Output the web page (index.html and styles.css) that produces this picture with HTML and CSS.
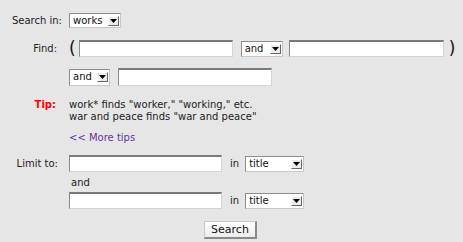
FILE: index.html
```
<!DOCTYPE html>
<html>
<head>
<meta charset="utf-8">
<link rel="stylesheet" href="styles.css">
</head>
<body>
<form class="search">
  <div class="row row-in">
    <span class="label label-in">Search in:</span>
    <span class="select sel-works"><span class="sel-text">works</span><span class="arrow"><svg width="7" height="4" viewBox="0 0 7 4"><path d="M0 0H7L3.5 4Z" fill="#000"/></svg></span></span>
  </div>
  <div class="row row-find">
    <span class="label label-find">Find:</span>
    <span class="paren open">(</span>
    <span class="input in-find1"></span>
    <span class="select sel-and"><span class="sel-text">and</span><span class="arrow"><svg width="7" height="4" viewBox="0 0 7 4"><path d="M0 0H7L3.5 4Z" fill="#000"/></svg></span></span>
    <span class="input in-find2"></span>
    <span class="paren close">)</span>
  </div>
  <div class="row row-and">
    <span class="select sel-and2"><span class="sel-text">and</span><span class="arrow"><svg width="7" height="4" viewBox="0 0 7 4"><path d="M0 0H7L3.5 4Z" fill="#000"/></svg></span></span>
    <span class="input in-find3"></span>
  </div>
  <div class="row row-tip">
    <span class="label label-tip">Tip:</span>
    <div class="tip-text">work* finds "worker," "working," etc.<br>war and peace finds "war and peace"</div>
  </div>
  <div class="row row-more">
    <a class="more" href="#">&lt;&lt; More tips</a>
  </div>
  <div class="row row-limit1">
    <span class="label label-limit">Limit to:</span>
    <span class="input in-limit"></span>
    <span class="in-word">in</span>
    <span class="select sel-title"><span class="sel-text">title</span><span class="arrow"><svg width="7" height="4" viewBox="0 0 7 4"><path d="M0 0H7L3.5 4Z" fill="#000"/></svg></span></span>
  </div>
  <div class="row row-andword">
    <span class="and-word">and</span>
  </div>
  <div class="row row-limit2">
    <span class="input in-limit"></span>
    <span class="in-word">in</span>
    <span class="select sel-title"><span class="sel-text">title</span><span class="arrow"><svg width="7" height="4" viewBox="0 0 7 4"><path d="M0 0H7L3.5 4Z" fill="#000"/></svg></span></span>
  </div>
  <div class="row-button">
    <button type="button" class="btn">Search</button>
  </div>
</form>
</body>
</html>
```
FILE: styles.css
```
html, body {
  margin: 0;
  padding: 0;
  background: #e6e6e6;
}
body {
  font-family: "DejaVu Sans", Verdana, sans-serif;
  font-size: 10px;
  color: #222;
  width: 463px;
  height: 242px;
  overflow: hidden;
}
.search {
  display: flex;
  flex-direction: column;
  padding-top: 13px;
}
.row {
  display: flex;
  align-items: center;
  padding-left: 69px;
  position: relative;
}
.label {
  width: 62px;
  margin-left: -69px;
  margin-right: 7px;
  text-align: right;
  color: #222;
  flex: none;
}
.label-find { width: 57px; margin-right: 12px; }
.label-tip { width: 56px; margin-right: 13px; color: #ff0000; font-weight: bold; }
.label-limit { width: 58px; margin-right: 11px; }

.select {
  display: inline-flex;
  align-items: center;
  justify-content: space-between;
  box-sizing: border-box;
  background: #fff;
  border-top: 1px solid #8c8c8c;
  border-left: 1px solid #8c8c8c;
  border-right: 1px solid #c8c8c8;
  border-bottom: 1px solid #c8c8c8;
  height: 15px;
  padding: 0 1px 0 3px;
  color: #111;
  flex: none;
}
.sel-text { line-height: 12px; }
.arrow {
  width: 11px;
  height: 10px;
  box-sizing: border-box;
  background: #ececec;
  border-top: 1px solid #fff;
  border-left: 1px solid #fff;
  border-right: 1px solid #666;
  border-bottom: 1px solid #666;
  display: flex;
  align-items: center;
  justify-content: center;
}
.sel-works { width: 52px; }
.sel-and { width: 42px; height: 16px; margin-left: 8px; }
.sel-and2 { width: 41px; height: 17px; }
.sel-title { width: 59px; height: 16px; margin-left: 6px; }

.input {
  display: block;
  box-sizing: border-box;
  background: #fff;
  border-top: 2px solid #7a7a7a;
  border-left: 1px solid #8a8a8a;
  border-right: 1px solid #d4d4d4;
  border-bottom: 1px solid #d4d4d4;
  height: 17px;
  flex: none;
}
.in-find1 { width: 154px; }
.in-find2 { width: 155px; margin-left: 6px; }
.in-find3 { width: 154px; height: 18px; margin-left: 8px; }
.in-limit { width: 153px; }

.paren {
  font-size: 17px;
  line-height: 17px;
  color: #111;
}
.paren.open { margin-left: 0; margin-right: 3px; }
.paren.close { margin-left: 5px; }

.row-find { margin-top: 12px; }
.row-and { margin-top: 11px; }
.row-tip {
  margin-top: 13px;
  align-items: flex-start;
}
.tip-text {
  line-height: 12px;
  color: #222;
}
.label-tip { line-height: 12px; margin-top: 0; }
.row-more { margin-top: 9px; }
.more {
  color: #663399;
  text-decoration: none;
  line-height: 12px;
}
.row-limit1 { margin-top: 11px; }
.in-word { margin-left: 8px; }
.row-andword { margin-top: 4px; }
.and-word { margin-left: 2px; line-height: 14px; }
.row-limit2 { margin-top: 2px; }

.row-button {
  display: flex;
  justify-content: center;
  margin-top: 12px;
  padding-right: 2px;
}
.btn {
  font-family: "DejaVu Sans", Verdana, sans-serif;
  font-size: 11px;
  color: #111;
  width: 53px;
  height: 18px;
  padding: 0;
  box-sizing: border-box;
  background: linear-gradient(#ffffff, #ececec);
  border-top: 1px solid #c8c8c8;
  border-left: 1px solid #c8c8c8;
  border-right: 2px solid #8a8a8a;
  border-bottom: 2px solid #8a8a8a;
  border-radius: 0;
}
```
